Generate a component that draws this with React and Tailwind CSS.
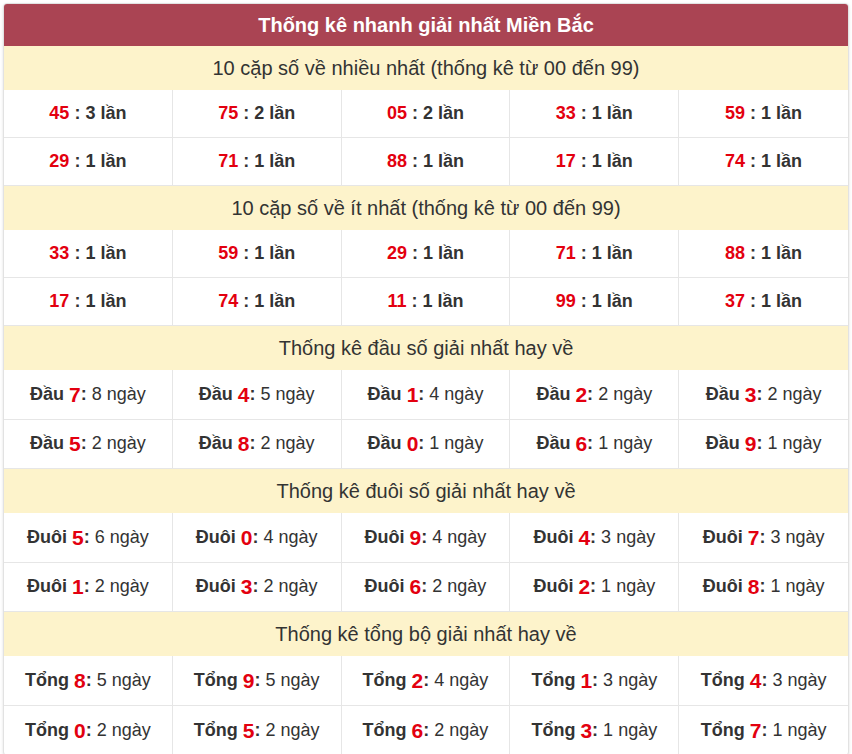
import React from 'react';

const font = { fontFamily: '"Liberation Sans", Arial, sans-serif' };

function Section({ title, children }) {
  return (
    <>
      <div className="h-[44px] flex items-center justify-center bg-[#fdf3cb] text-[20px] text-[#333]">
        {title}
      </div>
      {children}
    </>
  );
}

function PairRow({ items }) {
  return (
    <div className="grid grid-cols-5 h-[48px] border-b border-[#e6e6e6]">
      {items.map(([so, lan], i) => (
        <div
          key={i}
          className="flex items-center justify-center font-bold text-[18px] text-[#333] border-r border-[#e6e6e6] last:border-r-0"
        >
          <span className="text-[#e3000f]">{so}</span>
          <span>&nbsp;: {lan} lần</span>
        </div>
      ))}
    </div>
  );
}

function StatRow({ label, items, last }) {
  return (
    <div className={`grid grid-cols-5 h-[49.5px] ${last ? '' : 'border-b border-[#e6e6e6]'}`}>
      {items.map(([so, ngay], i) => (
        <div
          key={i}
          className="flex items-center justify-center text-[18px] text-[#333] border-r border-[#e6e6e6] last:border-r-0"
        >
          <span className="font-bold">{label}&nbsp;</span>
          <span className="font-bold text-[21px] text-[#e3000f] leading-none">{so}</span>
          <span className="font-bold">:</span>
          <span>&nbsp;{ngay} ngày</span>
        </div>
      ))}
    </div>
  );
}

export default function App() {
  const nhieu = [
    [['45', 3], ['75', 2], ['05', 2], ['33', 1], ['59', 1]],
    [['29', 1], ['71', 1], ['88', 1], ['17', 1], ['74', 1]],
  ];
  const it = [
    [['33', 1], ['59', 1], ['29', 1], ['71', 1], ['88', 1]],
    [['17', 1], ['74', 1], ['11', 1], ['99', 1], ['37', 1]],
  ];
  const dau = [
    [['7', 8], ['4', 5], ['1', 4], ['2', 2], ['3', 2]],
    [['5', 2], ['8', 2], ['0', 1], ['6', 1], ['9', 1]],
  ];
  const duoi = [
    [['5', 6], ['0', 4], ['9', 4], ['4', 3], ['7', 3]],
    [['1', 2], ['3', 2], ['6', 2], ['2', 1], ['8', 1]],
  ];
  const tong = [
    [['8', 5], ['9', 5], ['2', 4], ['1', 3], ['4', 3]],
    [['0', 2], ['5', 2], ['6', 2], ['3', 1], ['7', 1]],
  ];

  return (
    <div className="bg-white min-h-[754px] pt-[3px] px-[3px]" style={font}>
      <div className="w-[846px] bg-white rounded-[4px] border border-[#e2e2e2] shadow-[0_1px_3px_rgba(0,0,0,0.12)] overflow-hidden">
        <div className="h-[42px] flex items-center justify-center bg-[#aa4453] text-white font-bold text-[20px]">
          Thống kê nhanh giải nhất Miền Bắc
        </div>
        <Section title="10 cặp số về nhiều nhất (thống kê từ 00 đến 99)">
          {nhieu.map((r, i) => (
            <PairRow key={i} items={r} />
          ))}
        </Section>
        <Section title="10 cặp số về ít nhất (thống kê từ 00 đến 99)">
          {it.map((r, i) => (
            <PairRow key={i} items={r} />
          ))}
        </Section>
        <Section title="Thống kê đầu số giải nhất hay về">
          {dau.map((r, i) => (
            <StatRow key={i} label="Đầu" items={r} />
          ))}
        </Section>
        <Section title="Thống kê đuôi số giải nhất hay về">
          {duoi.map((r, i) => (
            <StatRow key={i} label="Đuôi" items={r} />
          ))}
        </Section>
        <Section title="Thống kê tổng bộ giải nhất hay về">
          {tong.map((r, i) => (
            <StatRow key={i} label="Tổng" items={r} last={i === 1} />
          ))}
        </Section>
      </div>
    </div>
  );
}
